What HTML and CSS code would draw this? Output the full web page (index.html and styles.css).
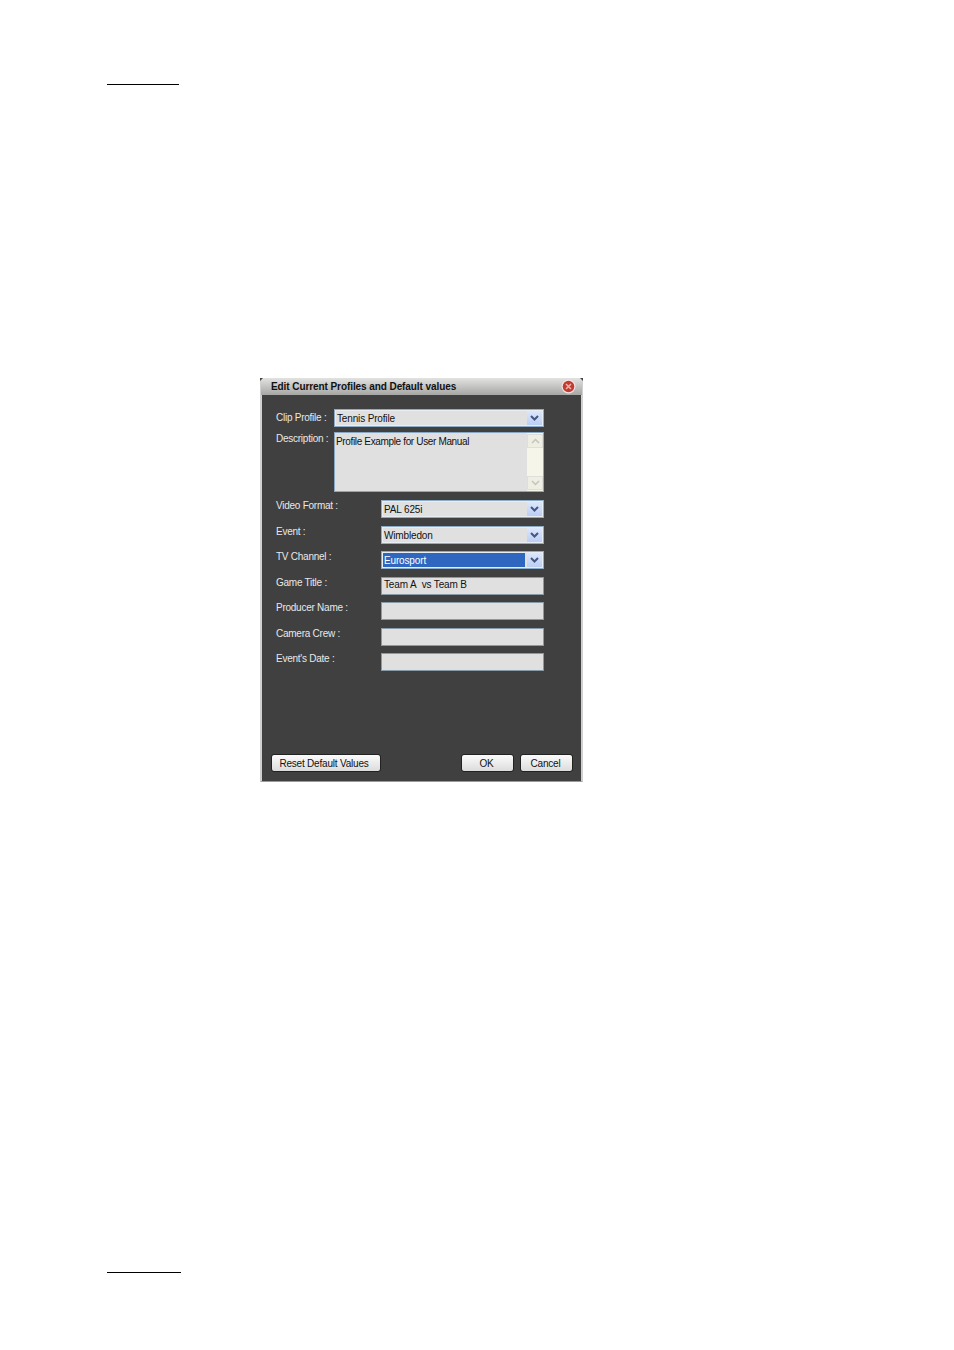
FILE: index.html
```html
<!DOCTYPE html>
<html lang="en">
<head>
    <meta charset="UTF-8">
    <title>Edit Current Profiles and Default values</title>
    <link rel="stylesheet" href="styles.css">
</head>
<body>
    <div class="page">
        <div class="rule rule-top"></div>

        <div class="dialog">
            <div class="titlebar">
                <span class="title">Edit Current Profiles and Default values</span>
                <svg class="close" width="15" height="15" viewBox="0 0 15 15">
                    <circle cx="7.500" cy="7.500" r="7" fill="#f0e4e2"/>
                    <circle cx="7.500" cy="7.500" r="5.800" fill="#c23a32"/>
                    <path d="M5 5 10 10M10 5 5 10" stroke="#e6b4ac" stroke-width="1.600"/>
                </svg>
            </div>

            <div class="form">
                <div class="top-row">
                    <label class="label">Clip Profile :</label>
                    <div class="field combo">
                        <span class="value">Tennis Profile</span>
                        <span class="arrow"><svg width="9" height="6" viewBox="0 0 9 6"><path d="M1 1 4.500 4.500 8 1" fill="none" stroke="#46567e" stroke-width="2"/></svg></span>
                    </div>
                </div>
                <div class="top-row desc-row">
                    <label class="label">Description :</label>
                    <div class="field memo">
                        <span class="value memo-text">Profile Example for User Manual</span>
                        <div class="scrollbar">
                            <span class="scroll-btn"><svg width="9" height="6" viewBox="0 0 9 6"><path d="M1 5 4.500 1.500 8 5" fill="none" stroke="#c4c4bc" stroke-width="1.500"/></svg></span>
                            <span class="scroll-btn"><svg width="9" height="6" viewBox="0 0 9 6"><path d="M1 1 4.500 4.500 8 1" fill="none" stroke="#c4c4bc" stroke-width="1.500"/></svg></span>
                        </div>
                    </div>
                </div>

                <div class="rows">
                    <div class="row">
                        <label class="label">Video Format :</label>
                        <div class="field combo">
                            <span class="value">PAL 625i</span>
                            <span class="arrow"><svg width="9" height="6" viewBox="0 0 9 6"><path d="M1 1 4.500 4.500 8 1" fill="none" stroke="#46567e" stroke-width="2"/></svg></span>
                        </div>
                    </div>
                    <div class="row">
                        <label class="label">Event :</label>
                        <div class="field combo">
                            <span class="value">Wimbledon</span>
                            <span class="arrow"><svg width="9" height="6" viewBox="0 0 9 6"><path d="M1 1 4.500 4.500 8 1" fill="none" stroke="#46567e" stroke-width="2"/></svg></span>
                        </div>
                    </div>
                    <div class="row">
                        <label class="label">TV Channel :</label>
                        <div class="field combo">
                            <span class="value selected">Eurosport</span>
                            <span class="arrow"><svg width="9" height="6" viewBox="0 0 9 6"><path d="M1 1 4.500 4.500 8 1" fill="none" stroke="#46567e" stroke-width="2"/></svg></span>
                        </div>
                    </div>
                    <div class="row">
                        <label class="label">Game Title :</label>
                        <div class="field plain"><span class="value">Team A&nbsp; vs Team B</span></div>
                    </div>
                    <div class="row">
                        <label class="label">Producer Name :</label>
                        <div class="field plain"></div>
                    </div>
                    <div class="row">
                        <label class="label">Camera Crew :</label>
                        <div class="field plain"></div>
                    </div>
                    <div class="row">
                        <label class="label">Event's Date :</label>
                        <div class="field plain"></div>
                    </div>
                </div>
            </div>

            <div class="buttons">
                <button class="btn btn-reset">Reset Default Values</button>
                <div class="btn-group">
                    <button class="btn btn-ok">OK</button>
                    <button class="btn btn-cancel">Cancel</button>
                </div>
            </div>
        </div>

        <div class="rule rule-bottom"></div>
    </div>
</body>
</html>
```

FILE: styles.css
```css
html, body { margin: 0; padding: 0; background: #fff; }
body { font-family: "Liberation Sans", Arial, sans-serif; font-size: 10px; }
.page { width: 954px; height: 1350px; padding-top: 84px; box-sizing: border-box; }

.rule { height: 1px; background: #000; margin-left: 107px; }
.rule-top { width: 72px; }
.rule-bottom { width: 74px; margin-top: 490px; }

.dialog { width: 323px; height: 404px; margin: 293px 0 0 260px; box-sizing: border-box; background: #404040; border: 2px solid #d0d0d0; border-top: 0; border-bottom: 1px solid #9a9a9a; display: flex; flex-direction: column; }

.titlebar { position: relative; height: 17px; flex: none; background: linear-gradient(#e2e2e0, #a6a6a4); display: flex; align-items: center; justify-content: space-between; padding: 0 6px 0 10px; margin: 0 -1px; }
.titlebar::before, .titlebar::after { content: ""; position: absolute; top: 0; width: 3px; height: 3px; background: #444; }
.titlebar::before { left: -1px; clip-path: polygon(0 0, 100% 0, 0 100%); }
.titlebar::after { right: -1px; clip-path: polygon(0 0, 100% 0, 100% 100%); }
.title { font-weight: bold; font-size: 10px; color: #111; letter-spacing: -0.080px; }
.close { display: block; }

.form { padding: 14px 37px 0 14px; }
.label { color: #e8e8e8; display: block; white-space: nowrap; letter-spacing: -0.250px; }
.top-row { display: flex; height: 18px; }
.top-row .label { width: 58px; flex: none; line-height: 18px; }
.desc-row { height: 60px; margin-top: 5px; }
.desc-row .label { line-height: 13px; }

.rows { margin-top: 8px; display: grid; grid-auto-rows: 18px; row-gap: 7.500px; }
.row { display: flex; }
.row .label { width: 105px; flex: none; line-height: 12px; }

.field { flex: 1; box-sizing: border-box; background: #e0e0e0; border: 1px solid #8fa8c0; display: flex; color: #111; line-height: 13px; letter-spacing: -0.150px; }
.combo { border: 1px solid #8cabc6; box-shadow: inset 0 0 0 1px #e6edf3; padding: 1px; }
.combo .value { line-height: 15px; padding-left: 1px; }
.plain { border-color: #8899a8; }
.value { flex: 1; padding-left: 2px; white-space: nowrap; }
.selected { background: #2e66c0; color: #fff; margin-right: 2px; }
.arrow { width: 15px; flex: none; background: linear-gradient(#dce7fc, #bccef5); display: flex; align-items: center; justify-content: center; }

.memo { border-color: #88a8c4; }
.memo-text { line-height: 15px; padding-left: 1px; padding-top: 1px; letter-spacing: -0.350px; }
.scrollbar { width: 16px; flex: none; background: #f6f5ea; display: flex; flex-direction: column; justify-content: space-between; padding: 1px 0; }
.scroll-btn { height: 14px; background: #eeeee2; border: 1px solid #dededa; box-sizing: border-box; display: flex; align-items: center; justify-content: center; }

.buttons { margin-top: auto; display: flex; justify-content: space-between; padding: 0 8px 9px 9px; }
.btn-group { display: flex; gap: 6px; }
.btn { height: 18px; box-sizing: border-box; padding: 0; font-family: "Liberation Sans", Arial, sans-serif; font-size: 10px; letter-spacing: -0.200px; color: #111; background: linear-gradient(#fbfbfb, #dcdcdc); border: 1px solid #222; border-radius: 3px; }
.btn-reset { width: 110px; padding-right: 4px; }
.btn-ok { width: 53px; padding-right: 2px; }
.btn-cancel { width: 53px; padding-right: 2px; }
```
